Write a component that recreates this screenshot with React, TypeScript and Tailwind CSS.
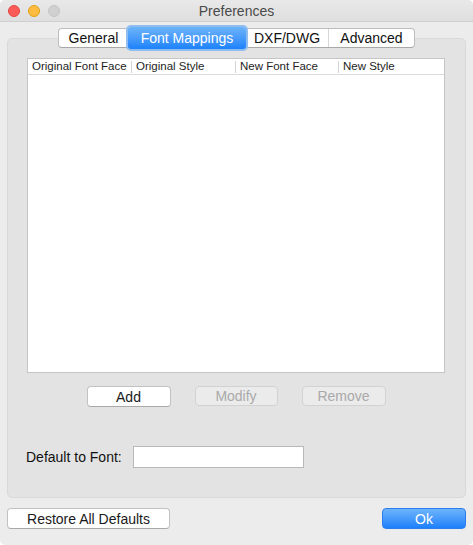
const tabs = ['General', 'Font Mappings', 'DXF/DWG', 'Advanced'];
const tabWidths = ['w-[69px]', 'w-[118px]', 'w-[82px]', 'w-[86px]'];

const columns = [
    { label: 'Original Font Face', width: 'w-[103px]' },
    { label: 'Original Style', width: 'w-[104px]' },
    { label: 'New Font Face', width: 'w-[103px]' },
    { label: 'New Style', width: 'flex-1' },
];

const TrafficLights = () => (
    <div className="absolute left-[8px] top-[5px] flex gap-[8px]">
        <span className="w-[12px] h-[12px] rounded-full bg-[#fc5b57] border border-[#e2463f]" />
        <span className="w-[12px] h-[12px] rounded-full bg-[#fdbc40] border border-[#e1a116]" />
        <span className="w-[12px] h-[12px] rounded-full bg-[#d0d0d0] border border-[#c4c4c4]" />
    </div>
);

interface IButtonProps {
    label: string;
    width: string;
    disabled?: boolean;
    primary?: boolean;
}

const MacButton = ({ label, width, disabled, primary }: IButtonProps) => {
    if (primary) {
        return (
            <button
                type="button"
                className={`${width} h-[21px] rounded-[4px] border border-[#2b7ef0] bg-gradient-to-b from-[#6cb3fa] to-[#1a80fb] text-white text-[14px] leading-none`}
            >
                {label}
            </button>
        );
    }
    return (
        <button
            type="button"
            className={
                disabled
                    ? `${width} h-[20px] rounded-[4px] border border-[#d2d2d2] bg-[#ebebeb] text-[#a9a9a9] text-[14px] leading-none`
                    : `${width} h-[21px] rounded-[4px] border border-[#c2c2c2] border-b-[#a9a9a9] bg-white text-[#1a1a1a] text-[14px] leading-none`
            }
        >
            {label}
        </button>
    );
};

export default function App() {
    return (
        <div className="w-[473px] h-[545px] bg-white" style={{ fontFamily: '"Liberation Sans", Arial, sans-serif' }}>
            <div className="w-full h-full bg-[#ececec] rounded-[5px] overflow-hidden flex flex-col">
                <div className="relative h-[22px] shrink-0 bg-gradient-to-b from-[#e9e9e9] to-[#dedede] border-b border-[#cfcfcf] flex items-center justify-center">
                    <TrafficLights />
                    <span className="text-[14px] text-[#4a4a4a] leading-none">Preferences</span>
                </div>

                <div className="flex flex-col px-[7px] pt-[6px]">
                    <div className="relative z-10 flex justify-center -mb-[10px]">
                        <div className="flex h-[20px] rounded-[4px] border border-[#bdbdbd] border-b-[#a8a8a8] bg-white">
                            {tabs.map((tab, i) =>
                                i === 1 ? (
                                    <div
                                        key={tab}
                                        className={`${tabWidths[i]} -my-[2px] h-[22px] rounded-[3px] bg-gradient-to-b from-[#6cb3fa] to-[#1a82fb] shadow-[0_0_0_2px_#8fbdf0] flex items-center justify-center text-white text-[14px]`}
                                    >
                                        {tab}
                                    </div>
                                ) : (
                                    <div
                                        key={tab}
                                        className={`${tabWidths[i]} ${i === 3 ? 'border-l border-[#d6d6d6]' : ''} flex items-center justify-center text-[#111] text-[14px]`}
                                    >
                                        {tab}
                                    </div>
                                )
                            )}
                        </div>
                    </div>

                    <div className="h-[460px] rounded-[5px] border border-[#d9d9d9] bg-[#e3e3e3] flex flex-col pt-[19px] pl-[19px]">
                        <div className="w-[418px] h-[315px] bg-white border border-[#c6c6c6] flex flex-col">
                            <div className="h-[16px] flex items-center border-b border-[#dcdcdc]">
                                {columns.map((col, i) => (
                                    <div key={col.label} className={`${col.width} shrink-0 h-full flex items-center overflow-hidden`}>
                                        {i > 0 && <span className="shrink-0 w-px h-[12px] bg-[#d4d4d4]" />}
                                        <span className="pl-[4px] whitespace-nowrap text-[11.5px] text-[#1e1e1e] leading-none">
                                            {col.label}
                                        </span>
                                    </div>
                                ))}
                            </div>
                        </div>

                        <div className="flex justify-center gap-[24px] mt-[13px] pr-[20px]">
                            <MacButton label="Add" width="w-[84px]" />
                            <MacButton label="Modify" width="w-[83px]" disabled />
                            <MacButton label="Remove" width="w-[84px]" disabled />
                        </div>

                        <div className="flex items-center mt-[39px] -ml-px">
                            <span className="text-[14px] text-[#111]">Default to Font:</span>
                            <div className="ml-[11px] w-[171px] h-[22px] bg-white border border-[#b9b9b9]" />
                        </div>
                    </div>

                    <div className="flex justify-between mt-[10px]">
                        <MacButton label="Restore All Defaults" width="w-[163px]" />
                        <MacButton label="Ok" width="w-[84px]" primary />
                    </div>
                </div>
            </div>
        </div>
    );
}
